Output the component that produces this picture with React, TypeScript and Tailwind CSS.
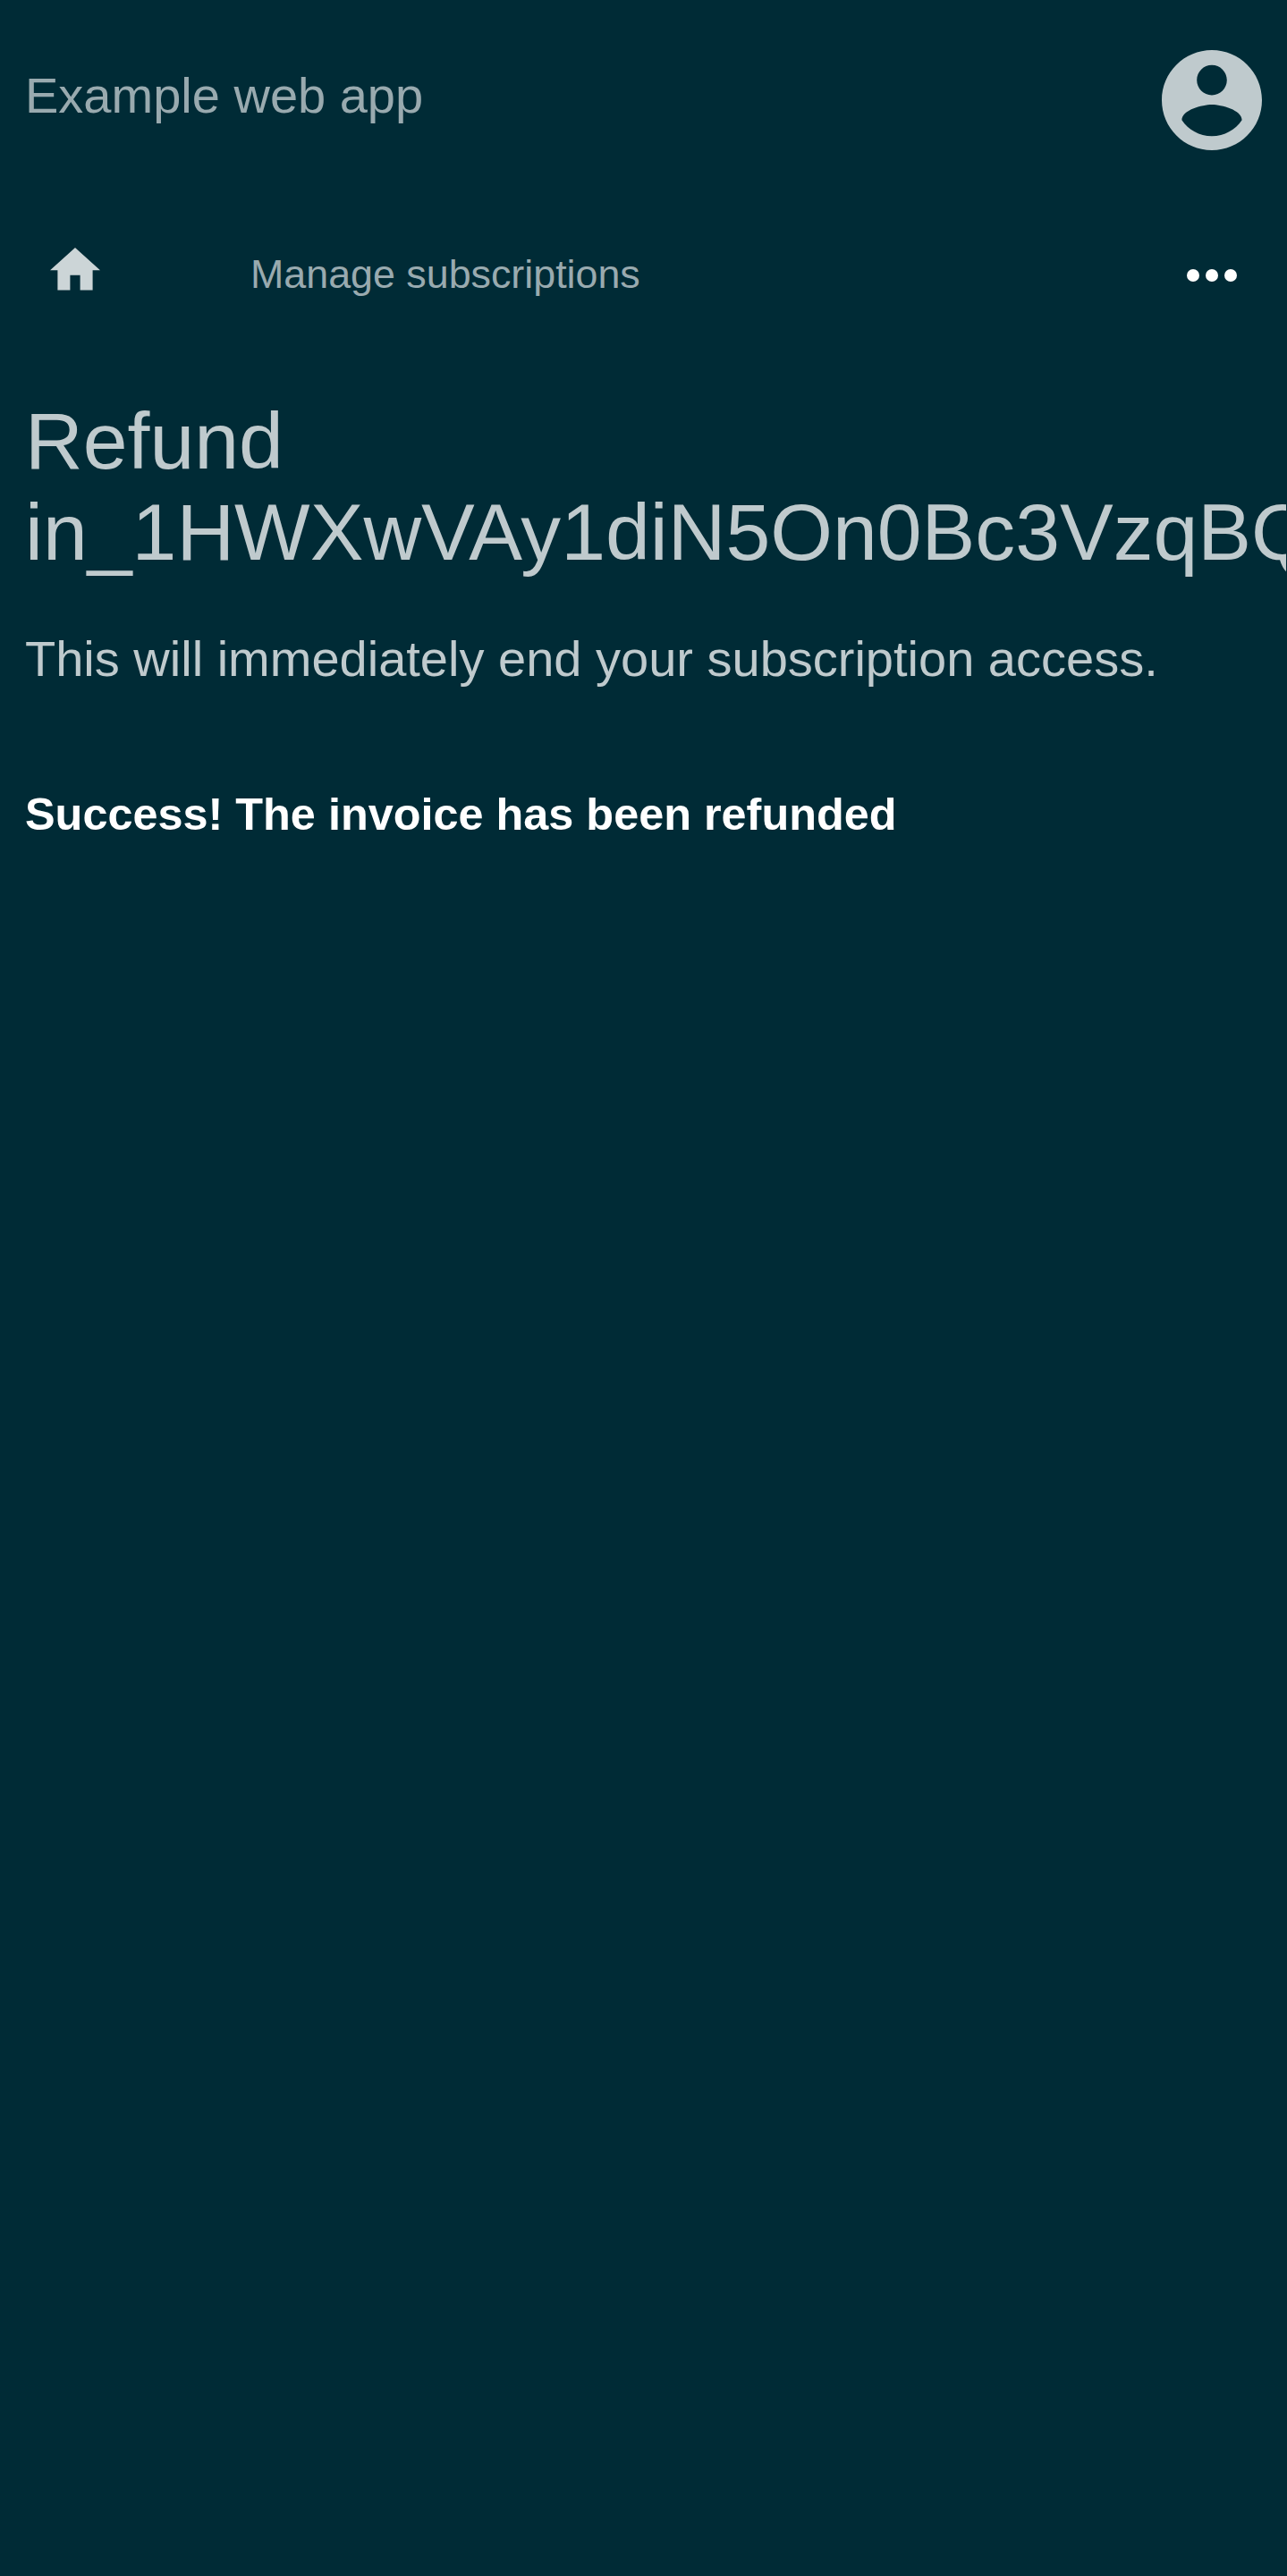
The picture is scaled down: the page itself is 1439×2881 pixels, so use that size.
function AccountIcon() {
  return (
    <svg viewBox="2 2 20 20" className="size-28 fill-[#bfcacd]" aria-hidden="true">
      <path d="M12 2C6.48 2 2 6.48 2 12s4.48 10 10 10 10-4.48 10-10S17.52 2 12 2zm0 3c1.66 0 3 1.34 3 3s-1.34 3-3 3-3-1.34-3-3 1.34-3 3-3zm0 14.2c-2.5 0-4.71-1.28-6-3.22.03-1.99 4-3.08 6-3.08 1.99 0 5.97 1.09 6 3.08-1.29 1.94-3.5 3.22-6 3.22z" />
    </svg>
  );
}

function HomeIcon() {
  return (
    <svg viewBox="2 3 20 17" className="mt-[109.4px] h-[47.6px] w-14 fill-[#ccd5d7]" aria-hidden="true">
      <path d="M10 20v-6h4v6h5v-8h3L12 3 2 12h3v8z" />
    </svg>
  );
}

function MoreIcon() {
  return (
    <svg viewBox="4 10 16 4" className="mt-[133px] ml-auto h-[14px] w-14 fill-white" aria-hidden="true">
      <circle cx="6" cy="12" r="2" />
      <circle cx="12" cy="12" r="2" />
      <circle cx="18" cy="12" r="2" />
    </svg>
  );
}

export default function App() {
  return (
    <div className="min-h-screen bg-[#002b36] font-['Liberation_Sans',Arial,sans-serif]">
      <div className="w-[1438px] overflow-hidden">
        <header className="flex h-[168px] items-start justify-between pt-14 pr-[27.5px] pl-7">
          <a href="#" className="mt-[19px] text-[56px] leading-[64px] text-[#99aaaf]">
            Example web app
          </a>
          <button type="button" aria-label="Account">
            <AccountIcon />
          </button>
        </header>
        <nav className="flex h-[274px] items-start pr-[55.5px] pl-14">
          <HomeIcon />
          <a href="#" className="mt-[112px] ml-[168px] text-[44.8px] leading-[52px] text-[#99aaaf]">
            Manage subscriptions
          </a>
          <MoreIcon />
        </nav>
        <main className="px-7">
          <h1 className="text-[89.6px] leading-[102px] text-[#bfcacd]">
            Refund in_1HWXwVAy1diN5On0Bc3VzqBQ
          </h1>
          <p className="mt-[59px] text-[56px] leading-[64px] text-[#bfcacd]">
            This will immediately end your subscription access.
          </p>
          <p className="mt-[113px] text-[50.4px] leading-[58px] font-bold text-white">
            Success! The invoice has been refunded
          </p>
        </main>
      </div>
    </div>
  );
}
